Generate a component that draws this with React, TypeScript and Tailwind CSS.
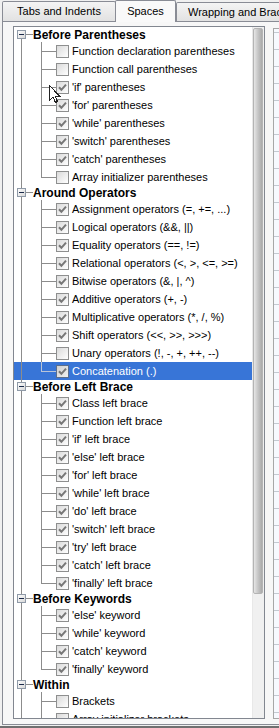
import React from "react";

type Item = { label: string; checked: boolean; selected?: boolean };
type Group = { title: string; items: Item[] };

const groups: Group[] = [
  {
    title: "Before Parentheses",
    items: [
      { label: "Function declaration parentheses", checked: false },
      { label: "Function call parentheses", checked: false },
      { label: "'if' parentheses", checked: true },
      { label: "'for' parentheses", checked: true },
      { label: "'while' parentheses", checked: true },
      { label: "'switch' parentheses", checked: true },
      { label: "'catch' parentheses", checked: true },
      { label: "Array initializer parentheses", checked: false },
    ],
  },
  {
    title: "Around Operators",
    items: [
      { label: "Assignment operators (=, +=, ...)", checked: true },
      { label: "Logical operators (&&, ||)", checked: true },
      { label: "Equality operators (==, !=)", checked: true },
      { label: "Relational operators (<, >, <=, >=)", checked: true },
      { label: "Bitwise operators (&, |, ^)", checked: true },
      { label: "Additive operators (+, -)", checked: true },
      { label: "Multiplicative operators (*, /, %)", checked: true },
      { label: "Shift operators (<<, >>, >>>)", checked: true },
      { label: "Unary operators (!, -, +, ++, --)", checked: false },
      { label: "Concatenation (.)", checked: true, selected: true },
    ],
  },
  {
    title: "Before Left Brace",
    items: [
      { label: "Class left brace", checked: true },
      { label: "Function left brace", checked: true },
      { label: "'if' left brace", checked: true },
      { label: "'else' left brace", checked: true },
      { label: "'for' left brace", checked: true },
      { label: "'while' left brace", checked: true },
      { label: "'do' left brace", checked: true },
      { label: "'switch' left brace", checked: true },
      { label: "'try' left brace", checked: true },
      { label: "'catch' left brace", checked: true },
      { label: "'finally' left brace", checked: true },
    ],
  },
  {
    title: "Before Keywords",
    items: [
      { label: "'else' keyword", checked: true },
      { label: "'while' keyword", checked: true },
      { label: "'catch' keyword", checked: true },
      { label: "'finally' keyword", checked: true },
    ],
  },
  {
    title: "Within",
    items: [
      { label: "Brackets", checked: false },
      { label: "Array initializer brackets", checked: false },
      { label: "Grouping parentheses", checked: false },
    ],
  },
];

const LINE = "#8c8c8c";

function Check({ checked, selected }: { checked: boolean; selected?: boolean }) {
  return (
    <div
      className={
        "w-[13px] h-[13px] shrink-0 border flex items-center justify-center " +
        (selected
          ? "border-[#5b6e8c] bg-gradient-to-br from-[#cfcfcf] to-[#f0f0f0]"
          : "border-[#8e8f8f] bg-gradient-to-br from-[#dadada] to-[#ffffff]")
      }
    >
      {checked && (
        <svg width="11" height="11" viewBox="0 0 11 11">
          <path
            d="M2 5.2 L4.4 7.8 L9 2.6"
            fill="none"
            stroke="#777777"
            strokeWidth="2"
          />
        </svg>
      )}
    </div>
  );
}

function HeaderRow({ title, first }: { title: string; first: boolean }) {
  return (
    <div className="h-[14px] flex items-center">
      <svg width="19" height="14" className="shrink-0" shapeRendering="crispEdges">
        {!first && <line x1="7.5" y1="0" x2="7.5" y2="3" stroke={LINE} />}
        <line x1="7.5" y1="11" x2="7.5" y2="14" stroke={LINE} />
        <line x1="12" y1="6.5" x2="19" y2="6.5" stroke={LINE} />
        <defs>
          <linearGradient id="exp" x1="0" y1="0" x2="1" y2="1">
            <stop offset="0" stopColor="#ffffff" />
            <stop offset="1" stopColor="#d6d6d6" />
          </linearGradient>
        </defs>
        <rect x="3.5" y="2.5" width="8" height="8" fill="url(#exp)" stroke="#8f9aa8" />
        <line x1="5" y1="6.5" x2="10" y2="6.5" stroke="#1a2a4a" />
      </svg>
      <span className="font-bold text-[12px] leading-[13px] whitespace-nowrap">{title}</span>
    </div>
  );
}

function ChildRow({ item, last }: { item: Item; last: boolean }) {
  return (
    <div
      className={
        "h-[18px] flex items-center " +
        (item.selected ? "bg-[#3875d7] text-white" : "text-black")
      }
    >
      <svg width="42" height="18" className="shrink-0" shapeRendering="crispEdges">
        <line x1="7.5" y1="0" x2="7.5" y2="18" stroke={LINE} />
        <line x1="27.5" y1="0" x2="27.5" y2={last ? 9 : 18} stroke={item.selected ? "#b8c4d8" : LINE} />
        <line x1="27" y1="9.5" x2="42" y2="9.5" stroke={item.selected ? "#b8c4d8" : LINE} />
      </svg>
      <Check checked={item.checked} selected={item.selected} />
      <span className="ml-[3px] leading-[13px] whitespace-nowrap">{item.label}</span>
    </div>
  );
}

function Cursor() {
  return (
    <svg
      width="13"
      height="21"
      viewBox="0 0 13 21"
      className="absolute left-[48px] top-[84px] z-20"
      shapeRendering="crispEdges"
    >
      <path
        d="M1.5 1.5 L1.5 16.5 L5 13 L7.5 18.5 L9.5 17.5 L7 12 L11.5 12 Z"
        fill="#ffffff"
        stroke="#222222"
        strokeWidth="1"
      />
    </svg>
  );
}

export default function App() {
  const gutterRows = Array.from({ length: 40 });
  return (
    <div className="w-[279px] h-[728px] bg-[#f0f0f0] overflow-hidden relative font-['Liberation_Sans',Arial,sans-serif] text-[11px] text-black">
      {/* tabs */}
      <div className="h-[21px] flex items-end pl-[2px]">
        <div className="h-[20px] w-[114px] shrink-0 border border-b-0 border-[#898c95] rounded-t-[2px] bg-gradient-to-b from-[#f4f4f4] to-[#e2e2e2] flex items-center justify-center whitespace-nowrap">
          Tabs and Indents
        </div>
        <div className="h-[22px] w-[61px] shrink-0 -ml-px -mb-px relative z-10 border border-b-0 border-[#898c95] rounded-t-[2px] bg-[#f9f9f9] flex items-center justify-center whitespace-nowrap">
          Spaces
        </div>
        <div className="h-[19px] w-[130px] shrink-0 border border-b-0 border-[#898c95] rounded-t-[2px] bg-gradient-to-b from-[#f4f4f4] to-[#e2e2e2] flex items-center pl-[11px] whitespace-nowrap">
          Wrapping and Braces
        </div>
      </div>

      {/* tab panel */}
      <div className="h-[704px] w-[300px] ml-[2px] border border-[#898c95] bg-[#f7f7f7]">
        <div className="flex pl-[10px] pt-[4px]">
          {/* tree */}
          <div className="w-[252px] h-[693px] shrink-0 border border-[#828790] bg-white flex">
            <div className="w-[238px] h-full overflow-hidden pt-[1px]">
              {groups.map((g, gi) => (
                <div key={g.title}>
                  <HeaderRow title={g.title} first={gi === 0} />
                  {g.items.map((it, ii) => (
                    <ChildRow key={it.label} item={it} last={ii === g.items.length - 1} />
                  ))}
                </div>
              ))}
            </div>
            <div className="w-[12px] h-full bg-[#f0f0f0] border-l border-[#e8e8e8] pt-[1px]">
              <div className="h-[566px] w-[10px] rounded-[2px] border border-[#b4b4b4] bg-gradient-to-r from-[#e6e6e6] via-[#c6c6c6] to-[#aaaaaa]" />
            </div>
          </div>
          {/* right preview */}
          <div className="ml-[8px] mt-[2px] h-[691px] w-[40px] shrink-0 border border-[#a7a7a7] bg-[#f7f9fe] overflow-hidden">
            <div className="h-[4px] border-b border-[#c4c9d1]" />
            {gutterRows.map((_, i) => (
              <div key={i} className="h-[17px] border-b border-[#c4c9d1]" />
            ))}
          </div>
        </div>
      </div>
      <div className="h-[1px]" />
      <div className="h-[2px] bg-[#6f6f6f]" />

      <Cursor />
    </div>
  );
}
